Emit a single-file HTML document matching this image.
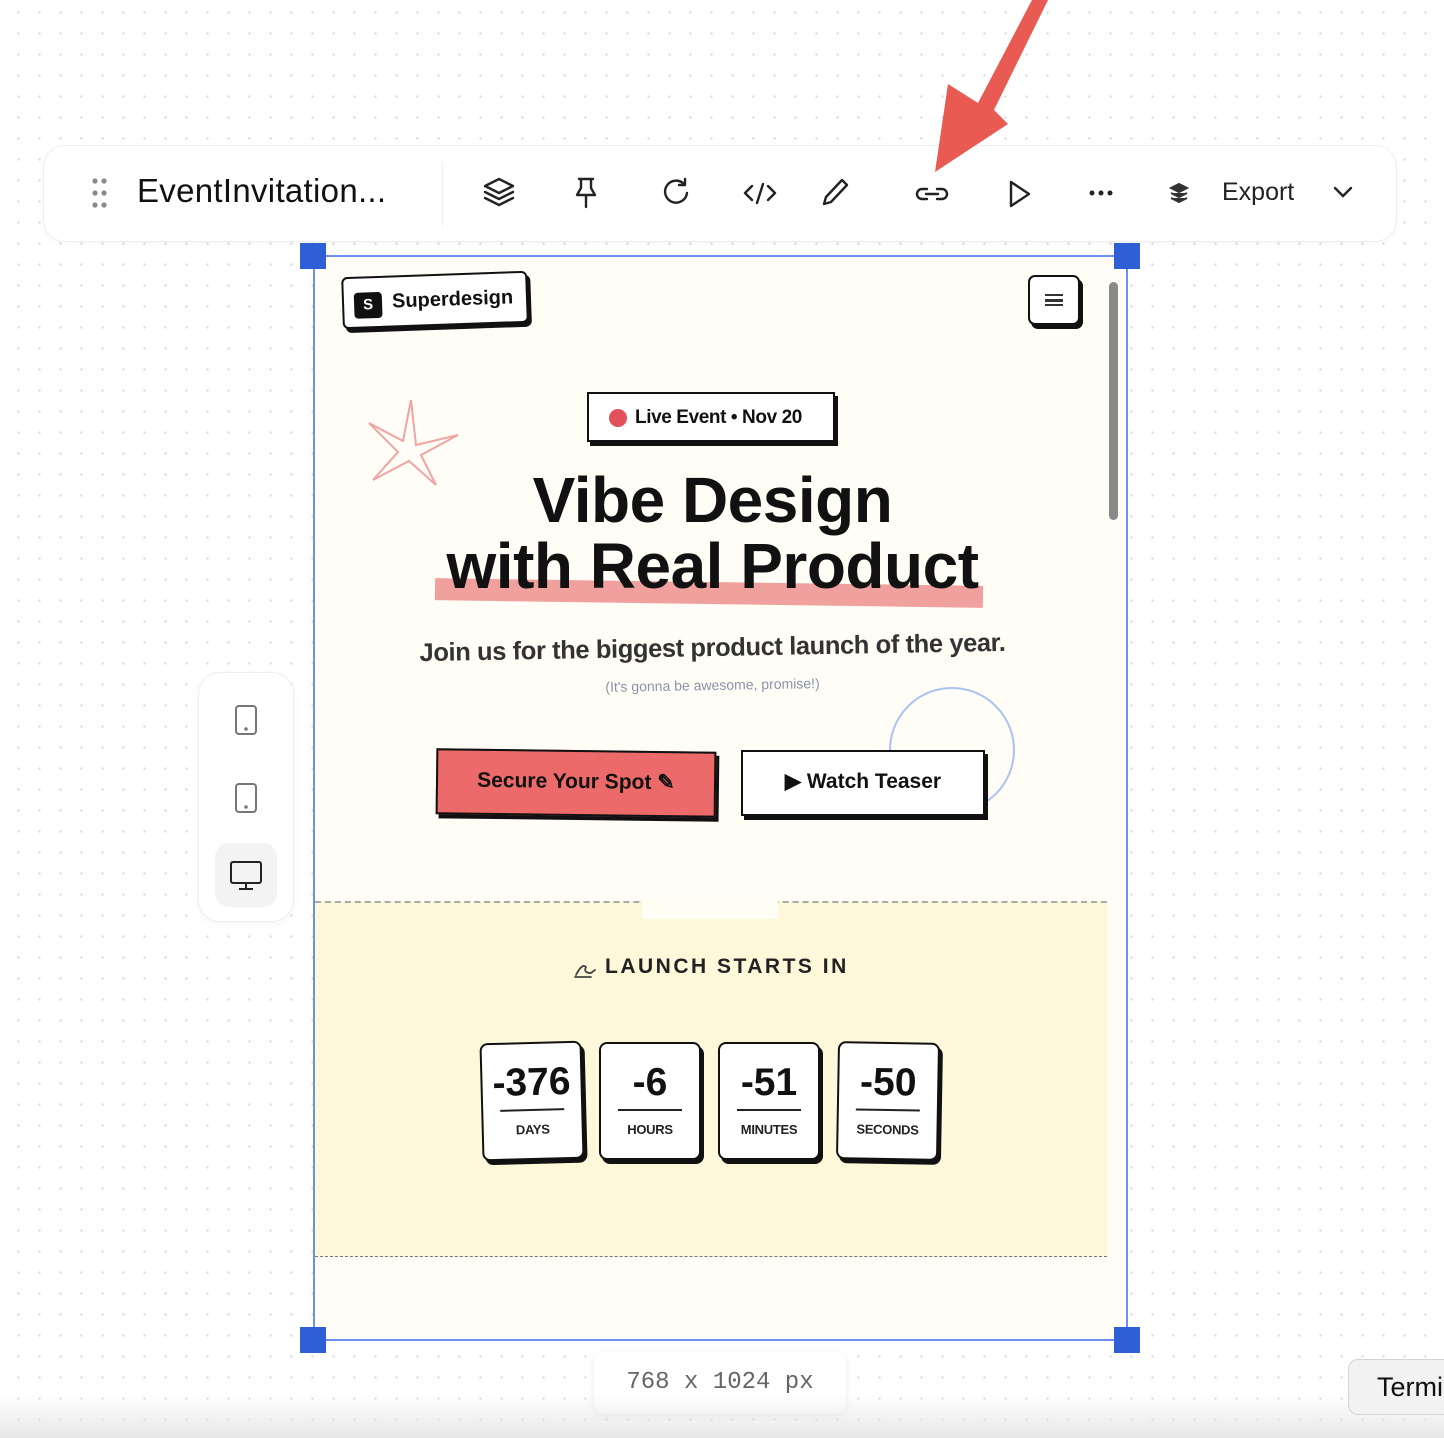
<!DOCTYPE html>
<html><head><meta charset="utf-8"><style>
*{box-sizing:border-box;margin:0;padding:0}
body{width:1444px;height:1438px;overflow:hidden;position:relative;background:#fff;font-family:"Liberation Sans",sans-serif;
background-image:radial-gradient(circle,#d6d6d6 1px,transparent 1.3px);background-size:21px 21px;background-position:8px 2px}
.abs{position:absolute}
.tb{left:43px;top:145px;width:1354px;height:97px;background:#fff;border:1px solid #eee;border-radius:22px;box-shadow:0 2px 6px rgba(0,0,0,.03)}
.frame{left:313px;top:255px;width:815px;height:1086px;border:2px solid #6f8ff0;background:#fffdf6;overflow:hidden}
.h{width:26px;height:26px;background:#2f5fd6;position:absolute}
.b3{border:2.5px solid #111;box-shadow:3px 4px 0 #111;background:#fff}
.cd{position:absolute;top:1042px;width:102px;height:118px;border:2.5px solid #111;border-radius:8px;background:#fff;box-shadow:3px 4px 0 #111;text-align:center}
.cd b{display:block;font-size:39px;margin-top:17px;color:#111}
.cd i{display:block;width:64px;height:2px;background:#222;margin:4px auto 10px}
.cd span{font-size:13px;font-weight:bold;color:#222;letter-spacing:-.3px}
</style></head><body>
<div class="abs tb"></div>
<svg class="abs" style="left:90px;top:176px" width="20" height="34"><g fill="#888"><circle cx="5" cy="5" r="2.6"/><circle cx="14" cy="5" r="2.6"/><circle cx="5" cy="17" r="2.6"/><circle cx="14" cy="17" r="2.6"/><circle cx="5" cy="29" r="2.6"/><circle cx="14" cy="29" r="2.6"/></g></svg>
<div class="abs" style="left:137px;top:172px;font-size:33px;color:#111;letter-spacing:.3px">EventInvitation...</div>
<div class="abs" style="left:442px;top:162px;width:1px;height:64px;background:#eee"></div>
<svg class="abs" style="left:480px;top:175px" width="900" height="36" fill="none" stroke="#222" stroke-width="2.4" stroke-linecap="round" stroke-linejoin="round">
<path d="M19 4 L33 11 L19 18 L5 11Z M5 17 L19 24 L33 17 M5 23 L19 30 L33 23"/>
<path d="M99 4 h14 M101 4 v9 l-4 7 h18 l-4-7 v-9 M106 20 v12"/>
<path d="M204 9 a11 11 0 1 0 3 9 M205 4 v6 h-6"/>
<path d="M272 11 l-7 7 7 7 M288 11 l7 7 -7 7 M283 9 l-6 19"/>
<path d="M362 5 l5 5 -16 17 -7 2 2 -7Z"/>
<path d="M447 14 h-5 a5 5 0 0 0 0 10 h5 M457 14 h5 a5 5 0 0 1 0 10 h-5 M446 19 h12"/>
<path d="M531 7 l18 12 -18 12Z"/>
</svg>
<svg class="abs" style="left:1088px;top:188px" width="30" height="10"><g fill="#222"><circle cx="4" cy="5" r="2.5"/><circle cx="13" cy="5" r="2.5"/><circle cx="22" cy="5" r="2.5"/></g></svg>
<svg class="abs" style="left:1168px;top:182px" width="22" height="24"><path d="M3 6 L11 2 19 6 11 10Z M3 11 l8 4 8-4 M3 16 l8 4 8-4" fill="#333" stroke="#333" stroke-width="2"/></svg>
<div class="abs" style="left:1222px;top:178px;font-size:25px;color:#222">Export</div>
<svg class="abs" style="left:1332px;top:184px" width="22" height="16"><path d="M3 4 l8 8 8-8" fill="none" stroke="#222" stroke-width="2.4" stroke-linecap="round"/></svg>
<svg class="abs" style="left:0;top:0" width="1444" height="200">
<path d="M1032 0 L1048 0 L994 110 L1008 124 L935 172 L948 84 L978 103 Z" fill="#e85a52"/>
</svg>

<div class="abs frame">
 <div class="abs b3" style="left:27px;top:17px;width:186px;height:52px;border-radius:6px;transform:rotate(-2deg)">
  <div class="abs" style="left:10px;top:14px;width:28px;height:26px;background:#111;border-radius:4px;color:#fff;font-weight:bold;font-size:15px;text-align:center;line-height:26px">S</div>
  <div class="abs" style="left:48px;top:13px;font-weight:bold;font-size:20px;color:#111">Superdesign</div>
 </div>
 <div class="abs b3" style="left:713px;top:18px;width:52px;height:50px;border-radius:7px">
  <div class="abs" style="left:15px;top:17px;width:18px;height:12px;border-top:2.5px solid #333;border-bottom:2.5px solid #333"></div>
  <div class="abs" style="left:15px;top:22px;width:18px;height:2.5px;background:#333"></div>
 </div>
 <div class="abs" style="left:794px;top:25px;width:9px;height:238px;background:#8a8a8a;border-radius:5px"></div>
 <svg class="abs" style="left:48px;top:138px" width="100" height="95"><path d="M48 5 L53 50 L95 40 L58 60 L73 90 L46 66 L10 85 L35 57 L6 28 L40 46Z" fill="none" stroke="#f0a5a2" stroke-width="2"/></svg>
 <div class="abs b3" style="left:272px;top:135px;width:248px;height:50px">
  <div class="abs" style="left:20px;top:15px;width:18px;height:18px;border-radius:50%;background:#e2505a"></div>
  <div class="abs" style="left:46px;top:13px;font-weight:bold;font-size:19px;color:#111;letter-spacing:-.4px">Live Event • Nov 20</div>
 </div>
 <div class="abs" style="left:120px;top:325px;width:548px;height:22px;background:#f0a19d;transform:rotate(.8deg)"></div>
 <div class="abs" style="left:0;top:210px;width:795px;text-align:center;font-weight:bold;font-size:64px;line-height:66px;color:#111;letter-spacing:-.5px">Vibe Design<br>with Real Product</div>
 <div class="abs" style="left:0;top:377px;width:795px;text-align:center;font-weight:bold;font-size:25.5px;color:#333;transform:rotate(-1deg);letter-spacing:-.4px">Join us for the biggest product launch of the year.</div>
 <div class="abs" style="left:0;top:420px;width:795px;text-align:center;font-size:14px;color:#8a93a8;transform:rotate(-1deg)">(It's gonna be awesome, promise!)</div>
 <div class="abs" style="left:574px;top:430px;width:126px;height:126px;border:2px solid #a9c3f3;border-radius:50%"></div>
 <div class="abs" style="left:121px;top:493px;width:280px;height:66px;background:#ec6a69;border:2.5px solid #111;box-shadow:3px 4px 0 #111;transform:rotate(.7deg);text-align:center;line-height:60px;font-weight:bold;font-size:21px;color:#111">Secure Your Spot ✎</div>
 <div class="abs b3" style="left:426px;top:493px;width:244px;height:66px;text-align:center;line-height:60px;font-weight:bold;font-size:21px;color:#111">▶ Watch Teaser</div>
 <div class="abs" style="left:0;top:644px;width:792px;height:356px;background:#fdf8d9;border-top:2px dashed #aaa;border-bottom:1.5px dashed #777"></div>
 <div class="abs" style="left:327px;top:644px;width:136px;height:18px;background:#fffef5"></div>
 <svg class="abs" style="left:258px;top:700px" width="24" height="22"><path d="M3 18 q6 -12 10 -8 q-3 6 5 6 l4 -3 M2 20 h16" fill="none" stroke="#444" stroke-width="1.8" stroke-linecap="round"/></svg>
 <div class="abs" style="left:290px;top:698px;font-weight:bold;font-size:21px;color:#222;letter-spacing:2.5px">LAUNCH STARTS IN</div>
</div>
<div class="cd" style="left:481px;transform:rotate(-1.5deg)"><b>-376</b><i></i><span>DAYS</span></div>
<div class="cd" style="left:599px"><b>-6</b><i></i><span>HOURS</span></div>
<div class="cd" style="left:718px"><b>-51</b><i></i><span>MINUTES</span></div>
<div class="cd" style="left:837px;transform:rotate(1deg)"><b>-50</b><i></i><span>SECONDS</span></div>

<div class="h" style="left:300px;top:243px"></div>
<div class="h" style="left:1114px;top:243px"></div>
<div class="h" style="left:300px;top:1327px"></div>
<div class="h" style="left:1114px;top:1327px"></div>

<div class="abs" style="left:198px;top:672px;width:96px;height:250px;background:#fff;border:1px solid #eee;border-radius:22px;box-shadow:0 2px 8px rgba(0,0,0,.04)"></div>
<div class="abs" style="left:215px;top:843px;width:62px;height:64px;background:#f3f3f3;border-radius:14px"></div>
<svg class="abs" style="left:226px;top:700px" width="40" height="200" fill="none" stroke="#777" stroke-width="2">
<rect x="10" y="6" width="20" height="28" rx="3"/><circle cx="20" cy="29" r=".8" fill="#777"/>
<rect x="10" y="84" width="20" height="28" rx="3"/><circle cx="20" cy="107" r=".8" fill="#777"/>
<g stroke="#222"><rect x="5" y="162" width="30" height="21" rx="2"/><path d="M20 183 v5 M13 189 h14"/></g>
</svg>

<div class="abs" style="left:594px;top:1352px;width:252px;height:62px;background:#fff;border-radius:10px;box-shadow:0 2px 8px rgba(0,0,0,.08);text-align:center;line-height:62px;font-family:'Liberation Mono',monospace;font-size:24px;color:#666">768 x 1024 px</div>
<div class="abs" style="left:0;top:1395px;width:1444px;height:43px;background:linear-gradient(rgba(255,255,255,0),rgba(225,225,225,.8))"></div>
<div class="abs" style="left:1348px;top:1359px;width:110px;height:56px;background:#f2f2f2;border:1px solid #d4d4d4;border-radius:10px;font-size:27px;line-height:54px;padding-left:28px;color:#111">Termi</div>
</body></html>
